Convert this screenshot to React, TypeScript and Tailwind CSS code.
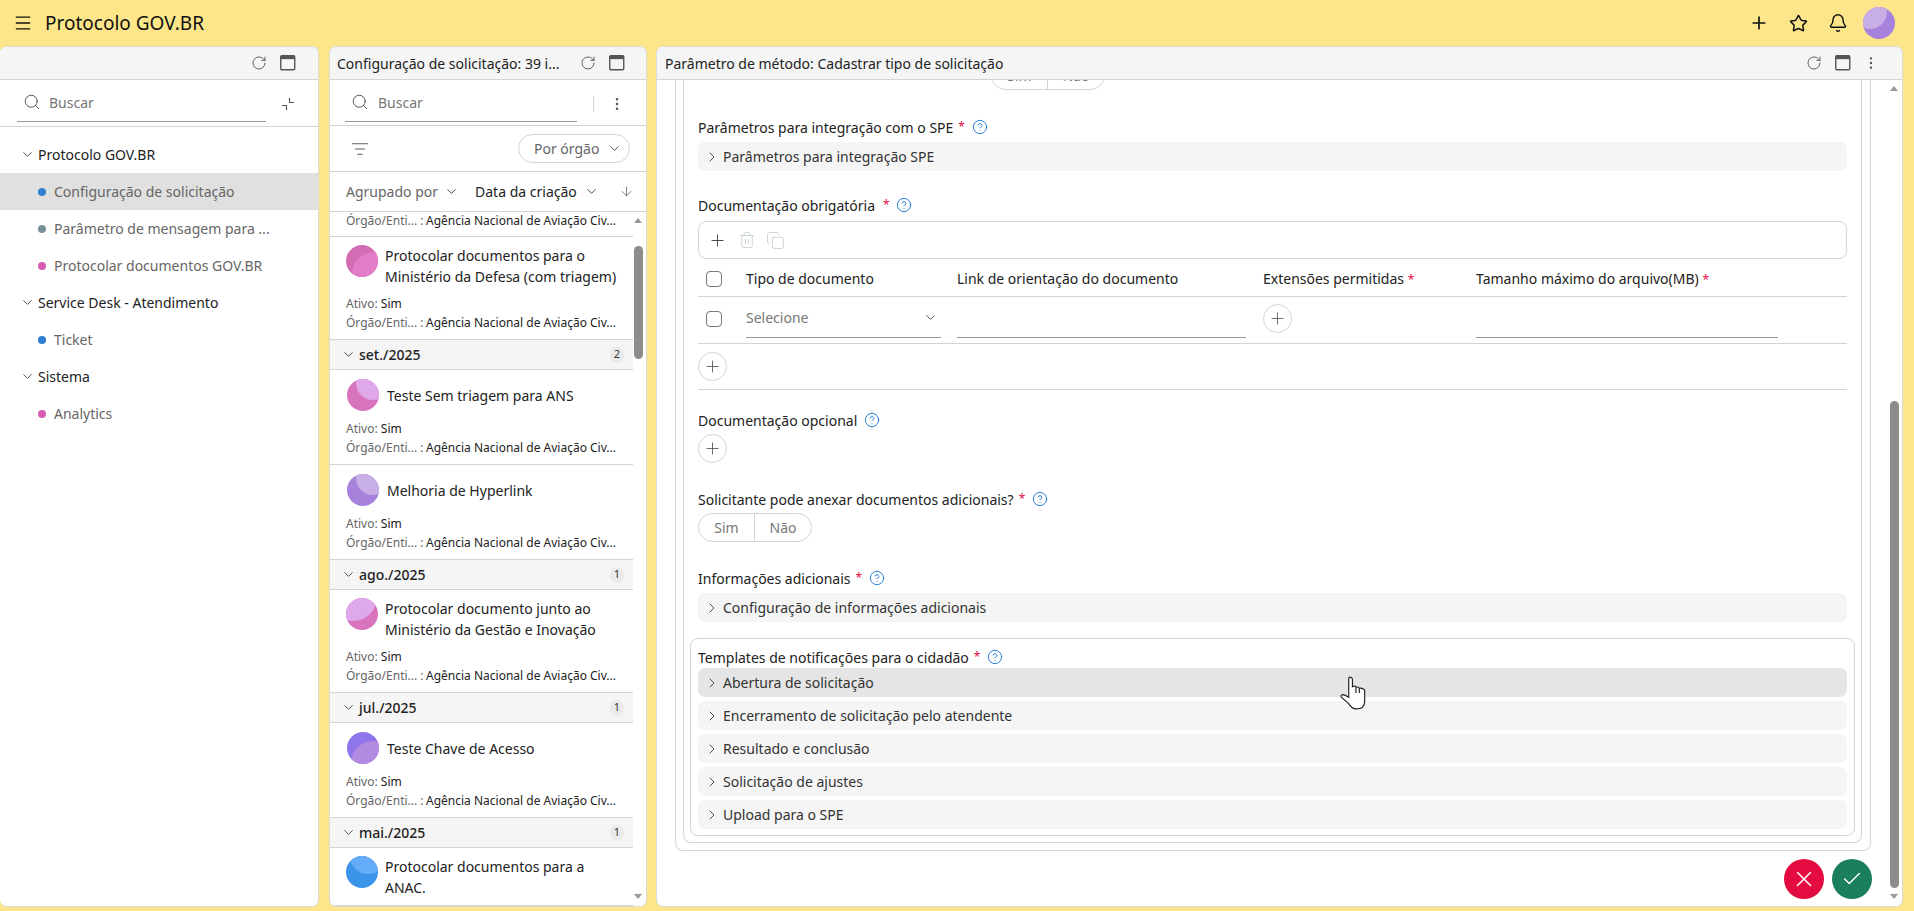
import { useId, type ReactNode } from "react";
import {
  ArrowDown,
  Bell,
  ChevronDown,
  ChevronRight,
  Copy,
  EllipsisVertical,
  ListFilter,
  Menu,
  Plus,
  RotateCw,
  Search,
  Star,
  Trash2,
  X,
  Check,
  CircleHelp,
} from "lucide-react";

function Avatar({
  base,
  light,
  cx,
  cy,
  r,
  size = 32,
}: {
  base: string;
  light: string;
  cx: number;
  cy: number;
  r: number;
  size?: number;
}) {
  const id = useId();
  return (
    <svg width={size} height={size} viewBox="0 0 32 32" className="shrink-0">
      <clipPath id={id}>
        <circle cx="16" cy="16" r="16" />
      </clipPath>
      <circle cx="16" cy="16" r="16" fill={base} />
      <circle cx={cx} cy={cy} r={r} fill={light} clipPath={`url(#${id})`} />
    </svg>
  );
}

function WindowIcon() {
  return (
    <svg width="16" height="16" viewBox="0 0 16 16" className="shrink-0">
      <rect x="0.75" y="0.75" width="14" height="14" rx="1.2" fill="none" stroke="#555" strokeWidth="1.4" />
      <rect x="0.75" y="0.75" width="14" height="3.4" fill="#555" />
    </svg>
  );
}

// two inward corners, the tree's "collapse all" button
function CollapseIcon() {
  return (
    <svg width="14" height="14" viewBox="0 0 14 14" fill="none" stroke="#555" strokeWidth="1.2" className="shrink-0">
      <path d="M8.5 1v4.5H13" />
      <path d="M1 8.5h4.5V13" />
    </svg>
  );
}

function HandCursor() {
  return (
    <svg
      width="27"
      height="34"
      viewBox="0 0 25 32"
      fill="white"
      stroke="#222"
      strokeWidth="1.1"
      className="absolute left-[683px] top-[596px]"
    >
      <path d="M8 20V3Q8 1 9.5 1T11.5 3V10Q13.5 9 15 10.5 17 10 18 11.5 21 11 23 13V24Q23 31 15 31 11 31 8 26L1 20Q0 17.5 3 17.5 5 18 8 20Z" />
      <path d="M14.8 10.5V16M18 11.5V16" fill="none" />
    </svg>
  );
}

function HeaderActions({ dots }: { dots?: boolean }) {
  return (
    <div className="ml-auto flex items-center gap-[13px]">
      <RotateCw size={16} strokeWidth={1.4} className="text-[#555]" />
      <WindowIcon />
      {dots && <EllipsisVertical size={16} strokeWidth={1.6} className="ml-[-1px] text-[#555]" />}
    </div>
  );
}

function PanelHead({ title, dots, pr }: { title?: string; dots?: boolean; pr: string }) {
  return (
    <div className={`flex h-[33px] shrink-0 items-center border-b border-[#d4d4d4] bg-[#f5f5f5] ${pr}`}>
      {title && <span className="truncate text-[14px] text-[#222]">{title}</span>}
      <HeaderActions dots={dots} />
    </div>
  );
}

function TreeGroup({ label, children }: { label: string; children: ReactNode }) {
  return (
    <>
      <div className="flex h-[37px] items-center pl-[20px] text-[14px] text-[#222]">
        <ChevronDown size={15} strokeWidth={1.5} className="mr-[3px] text-[#444]" />
        {label}
      </div>
      {children}
    </>
  );
}

function TreeItem({ label, dot, active }: { label: string; dot: string; active?: boolean }) {
  return (
    <div className={`flex h-[37px] items-center pl-[38px] text-[14px] text-[#666] ${active ? "bg-[#e0e0e0]" : ""}`}>
      <span className="mr-[8px] h-[8px] w-[8px] rounded-full" style={{ background: dot }} />
      {label}
    </div>
  );
}

function Meta({ only }: { only?: boolean }) {
  return (
    <div className="text-[12px] leading-[18.5px] text-[#666]">
      {!only && (
        <div>
          Ativo: <span className="text-[#222]">Sim</span>
        </div>
      )}
      <div className="flex">
        <span className="w-[80px]">Órgão/Enti... :</span>
        <span className="text-[#222]">Agência Nacional de Aviação Civ...</span>
      </div>
    </div>
  );
}

function Card({
  title,
  h,
  avatar,
  tall,
  noMeta,
}: {
  title: string;
  h: string;
  avatar: ReactNode;
  tall?: boolean;
  noMeta?: boolean;
}) {
  return (
    <div className={`flex flex-col border-b border-[#d4d4d4] pl-[16px] pr-[12px] ${h}`}>
      <div className={`flex ${tall ? "mt-[8px] items-start" : "mt-[9px] items-center pl-[1px]"} gap-[7px]`}>
        {avatar}
        <div className={`text-[14px] leading-[21px] text-[#222] ${tall ? "" : "pl-[1px]"}`}>{title}</div>
      </div>
      {!noMeta && (
        <div className="mt-auto mb-[7px]">
          <Meta />
        </div>
      )}
    </div>
  );
}

function GroupRow({ label, count }: { label: string; count: number }) {
  return (
    <div className="flex h-[30px] items-center border-b border-[#d4d4d4] bg-[#f5f5f5] pl-[11px] pr-[9px]">
      <ChevronDown size={15} strokeWidth={1.5} className="mr-[3px] text-[#444]" />
      <span className="text-[14px] font-medium text-[#222]">{label}</span>
      <span className="ml-auto flex h-[16px] w-[14px] items-center justify-center rounded-full bg-[#eaeaea] text-[11px] text-[#333]">
        {count}
      </span>
    </div>
  );
}

function ScrollBar({ thumbClass, rightClass }: { thumbClass: string; rightClass: string }) {
  return (
    <div className={`absolute top-0 bottom-0 w-[15px] ${rightClass}`}>
      <span className="absolute top-[6px] left-[3px] h-0 w-0 border-x-[4.5px] border-b-[5px] border-x-transparent border-b-[#999]" />
      <span className={`absolute left-[3px] w-[9px] rounded-full bg-[#8c8c8c] ${thumbClass}`} />
      <span className="absolute bottom-[7px] left-[3px] h-0 w-0 border-x-[4.5px] border-t-[5px] border-x-transparent border-t-[#999]" />
    </div>
  );
}

function Required() {
  return <span className="text-[12px] text-[#e30b3f]">*</span>;
}

function Help() {
  return <CircleHelp size={16} strokeWidth={1.4} className="shrink-0 text-[#1976d2]" />;
}

function FieldLabel({
  text,
  required,
  gap = "gap-[5px]",
  helpMl = "ml-[2px]",
  mt,
}: {
  text: string;
  required?: boolean;
  gap?: string;
  helpMl?: string;
  mt: string;
}) {
  return (
    <div className={`flex h-[20px] items-center text-[14px] text-[#222] ${mt} ${gap}`}>
      <span>{text}</span>
      {required && <Required />}
      <span className={helpMl}>
        <Help />
      </span>
    </div>
  );
}

function Accordion({ text, hover, mt }: { text: string; hover?: boolean; mt?: string }) {
  return (
    <div className={`flex h-[29px] items-center rounded-[7px] pl-[6px] text-[14px] text-[#333] ${hover ? "bg-[#e5e5e5]" : "bg-[#f5f5f5]"} ${mt ?? ""}`}>
      <ChevronRight size={16} strokeWidth={1.4} className="mr-[3px] text-[#444]" />
      {text}
    </div>
  );
}

function RoundAdd({ mt }: { mt?: string }) {
  return (
    <div className={`flex h-[29px] w-[29px] shrink-0 items-center justify-center rounded-full border border-[#d4d4d4] ${mt ?? ""}`}>
      <Plus size={19} strokeWidth={1.1} className="text-[#555]" />
    </div>
  );
}

function YesNo({ className }: { className?: string }) {
  return (
    <div className={`flex h-[29px] w-[114px] rounded-full border border-[#d4d4d4] text-[14px] text-[#777] ${className ?? ""}`}>
      <span className="flex w-[56px] items-center justify-center border-r border-[#d4d4d4]">Sim</span>
      <span className="flex flex-1 items-center justify-center">Não</span>
    </div>
  );
}

function Checkbox() {
  return <span className="block h-[16px] w-[16px] rounded-[4px] border border-[#777] bg-white" />;
}

export default function App() {
  return (
    <div className="flex h-[911px] w-[1914px] flex-col overflow-hidden bg-[#fde68a] font-['Noto_Sans',sans-serif]">
      <header className="flex h-[46px] shrink-0 items-center pl-[13px] pr-[19px] text-[#111]">
        <Menu size={20} strokeWidth={1.6} />
        <span className="ml-[12px] text-[19px]">Protocolo GOV.BR</span>
        <div className="ml-auto flex items-center">
          <Plus size={20} strokeWidth={2} />
          <Star size={19} strokeWidth={1.9} className="ml-[20px]" />
          <Bell size={20} strokeWidth={1.7} className="ml-[20px]" />
          <span className="ml-[15px]">
            <Avatar base="#a682dd" light="#c7aee4" cx={7} cy={5} r={17} />
          </span>
        </div>
      </header>

      <div className="flex h-[861px] shrink-0">
        <section className="flex w-[319px] flex-col overflow-hidden rounded-[7px] border border-[#dadada] border-l-0 bg-white">
          <PanelHead pr="pr-[22px]" />
          <div className="flex h-[47px] shrink-0 items-start border-b border-[#d4d4d4] pl-[17px] pr-[23px]">
            <div className="flex h-[42px] w-[249px] items-center gap-[8px] border-b border-[#999] pl-[6px] pt-[3px] text-[14px] text-[#777]">
              <Search size={18} strokeWidth={1.3} className="text-[#555]" />
              Buscar
            </div>
            <span className="ml-auto mt-[17px]">
              <CollapseIcon />
            </span>
          </div>
          <nav className="pt-[9px]">
            <TreeGroup label="Protocolo GOV.BR">
              <TreeItem label="Configuração de solicitação" dot="#2f7ed0" active />
              <TreeItem label="Parâmetro de mensagem para ..." dot="#78909c" />
              <TreeItem label="Protocolar documentos GOV.BR" dot="#d65cb0" />
            </TreeGroup>
            <TreeGroup label="Service Desk - Atendimento">
              <TreeItem label="Ticket" dot="#2f7ed0" />
            </TreeGroup>
            <TreeGroup label="Sistema">
              <TreeItem label="Analytics" dot="#d65cb0" />
            </TreeGroup>
          </nav>
        </section>

        <section className="ml-[10px] flex w-[318px] flex-col overflow-hidden rounded-[7px] border border-[#dadada] bg-white">
          <PanelHead title="Configuração de solicitação: 39 i..." pr="pl-[7px] pr-[21px]" />
          <div className="flex h-[46px] shrink-0 items-start border-b border-[#d4d4d4] pl-[15px]">
            <div className="flex h-[42px] w-[232px] items-center gap-[9px] border-b border-[#999] pl-[6px] pt-[3px] text-[14px] text-[#777]">
              <Search size={18} strokeWidth={1.3} className="text-[#555]" />
              Buscar
            </div>
            <span className="ml-[16px] mt-[16px] h-[16px] border-l border-[#d4d4d4]" />
            <EllipsisVertical size={16} strokeWidth={1.8} className="ml-[15px] mt-[16px] text-[#555]" />
          </div>
          <div className="flex h-[46px] shrink-0 items-center border-b border-[#d4d4d4] pl-[21px] pr-[16px]">
            <ListFilter size={18} strokeWidth={1.3} className="text-[#555]" />
            <div className="ml-auto flex h-[29px] w-[112px] items-center rounded-full border border-[#d4d4d4] pl-[15px] text-[14px] text-[#666]">
              Por órgão
              <ChevronDown size={15} strokeWidth={1.5} className="ml-[8px] text-[#444]" />
            </div>
          </div>
          <div className="flex h-[40px] shrink-0 items-center border-b border-[#d4d4d4] pl-[16px] pr-[12px] text-[14px]">
            <span className="text-[#666]">Agrupado por</span>
            <ChevronDown size={15} strokeWidth={1.5} className="ml-[6px] text-[#444]" />
            <span className="ml-[16px] text-[#222]">Data da criação</span>
            <ChevronDown size={15} strokeWidth={1.5} className="ml-[7px] text-[#444]" />
            <ArrowDown size={15} strokeWidth={1.2} className="ml-auto text-[#555]" />
          </div>
          <div className="relative min-h-0 flex-1 overflow-hidden">
            <div className="w-[303px]">
              <div className="flex h-[25px] items-start border-b border-[#d4d4d4] pl-[16px] pr-[12px]">
                <Meta only />
              </div>
              <Card
                title="Protocolar documentos para o Ministério da Defesa (com triagem)"
                h="h-[103px]"
                tall
                avatar={<Avatar base="#d36db3" light="#e37cc9" cx={28} cy={29} r={22} />}
              />
              <GroupRow label="set./2025" count={2} />
              <Card
                title="Teste Sem triagem para ANS"
                h="h-[95px]"
                avatar={<Avatar base="#d873bd" light="#dfa9e9" cx={26} cy={4} r={17} />}
              />
              <Card
                title="Melhoria de Hyperlink"
                h="h-[95px]"
                avatar={<Avatar base="#a682dd" light="#c7aee4" cx={26} cy={4} r={17} />}
              />
              <GroupRow label="ago./2025" count={1} />
              <Card
                title="Protocolar documento junto ao Ministério da Gestão e Inovação"
                h="h-[103px]"
                tall
                avatar={<Avatar base="#d973bd" light="#dea8eb" cx={8} cy={1} r={22} />}
              />
              <GroupRow label="jul./2025" count={1} />
              <Card
                title="Teste Chave de Acesso"
                h="h-[95px]"
                avatar={<Avatar base="#8e75ec" light="#b28ae0" cx={26} cy={31} r={22} />}
              />
              <GroupRow label="mai./2025" count={1} />
              <Card
                title="Protocolar documentos para a ANAC."
                h="h-[58px]"
                tall
                noMeta
                avatar={<Avatar base="#3c93ea" light="#64acf7" cx={22} cy={0} r={18} />}
              />
            </div>
            <ScrollBar rightClass="right-0" thumbClass="top-[34px] h-[113px]" />
          </div>
        </section>

        <section className="relative ml-[9px] flex w-[1247px] flex-col overflow-hidden rounded-[7px] border border-[#dadada] bg-white">
          <PanelHead title="Parâmetro de método: Cadastrar tipo de solicitação" dots pr="pl-[8px] pr-[23px]" />
          <div className="relative min-h-0 flex-1 overflow-hidden">
            <div className="ml-[18px] h-[771px] w-[1196px] rounded-b-[8px] border-x border-b border-[#d4d4d4] pl-[7px] pr-[8px]">
              <div className="h-[763px] w-[1179px] overflow-hidden rounded-b-[8px] border-x border-b border-[#d4d4d4] px-[14px]">
                <YesNo className="-mt-[19px] ml-[293px]" />
                <FieldLabel text="Parâmetros para integração com o SPE" required mt="mt-[27px]" />
                <Accordion text="Parâmetros para integração SPE" mt="mt-[5px]" />

                <FieldLabel text="Documentação obrigatória" required gap="gap-[8px]" helpMl="ml-[-2px]" mt="mt-[24px]" />
                <div className="mt-[6px] flex h-[38px] items-center gap-[11px] rounded-[8px] border border-[#d4d4d4] pl-[9px]">
                  <Plus size={19} strokeWidth={1.2} className="text-[#444]" />
                  <Trash2 size={18} strokeWidth={1.1} className="text-[#c4cdd0]" />
                  <Copy size={19} strokeWidth={1.1} className="-ml-[1px] text-[#c4cdd0]" />
                </div>
                <div className="flex h-[38px] items-center border-b border-[#d4d4d4] pl-[8px] pt-[2px] text-[14px] text-[#222]">
                  <Checkbox />
                  <span className="ml-[24px] w-[211px]">Tipo de documento</span>
                  <span className="w-[306px]">Link de orientação do documento</span>
                  <span className="w-[213px]">
                    Extensões permitidas <Required />
                  </span>
                  <span>
                    Tamanho máximo do arquivo(MB) <Required />
                  </span>
                </div>
                <div className="flex h-[47px] items-start border-b border-[#d4d4d4] pl-[8px]">
                  <span className="mt-[14px]">
                    <Checkbox />
                  </span>
                  <div className="ml-[24px] flex h-[41px] w-[195px] items-center border-b border-[#999] pt-[1px] text-[14px] text-[#777]">
                    Selecione
                    <ChevronDown size={15} strokeWidth={1.5} className="ml-auto mr-[3px] text-[#444]" />
                  </div>
                  <div className="ml-[16px] h-[41px] w-[289px] border-b border-[#999]" />
                  <RoundAdd mt="ml-[17px] mt-[7px]" />
                  <div className="ml-[184px] h-[41px] w-[302px] border-b border-[#999]" />
                </div>
                <RoundAdd mt="mt-[8px]" />
                <div className="mt-[8px] border-b border-[#d4d4d4]" />

                <FieldLabel text="Documentação opcional" mt="mt-[20px]" />
                <RoundAdd mt="mt-[4px]" />

                <FieldLabel text="Solicitante pode anexar documentos adicionais?" required mt="mt-[26px]" />
                <YesNo className="mt-[4px]" />

                <FieldLabel text="Informações adicionais" required mt="mt-[26px]" />
                <Accordion text="Configuração de informações adicionais" mt="mt-[5px]" />

                <div className="-mx-[8px] mt-[16px] rounded-[8px] border border-[#d4d4d4] px-[7px] pb-[6px] pt-[8px]">
                  <FieldLabel text="Templates de notificações para o cidadão" required mt="" />
                  <div className="mt-[1px] flex flex-col gap-[4px]">
                    <Accordion text="Abertura de solicitação" hover />
                    <Accordion text="Encerramento de solicitação pelo atendente" />
                    <Accordion text="Resultado e conclusão" />
                    <Accordion text="Solicitação de ajustes" />
                    <Accordion text="Upload para o SPE" />
                  </div>
                </div>
              </div>
            </div>

            <div className="absolute bottom-[7px] right-[30px] flex gap-[8px]">
              <span className="flex h-[40px] w-[40px] items-center justify-center rounded-full bg-[#e30b3f] text-white">
                <X size={26} strokeWidth={1.4} />
              </span>
              <span className="flex h-[40px] w-[40px] items-center justify-center rounded-full bg-[#1a7f5a] text-white">
                <Check size={22} strokeWidth={1.6} />
              </span>
            </div>
            <ScrollBar rightClass="right-0" thumbClass="top-[321px] bottom-[18px]" />
            <HandCursor />
          </div>
        </section>
      </div>
    </div>
  );
}
